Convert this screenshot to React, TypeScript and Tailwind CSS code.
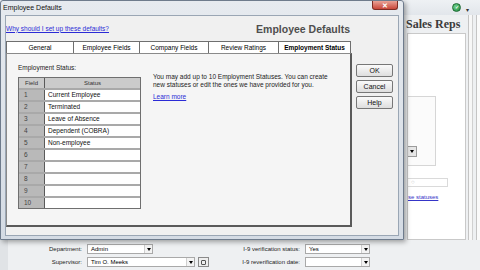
import React from 'react';

const rows: [string, string][] = [
  ['1', 'Current Employee'],
  ['2', 'Terminated'],
  ['3', 'Leave of Absence'],
  ['4', 'Dependent (COBRA)'],
  ['5', 'Non-employee'],
  ['6', ''],
  ['7', ''],
  ['8', ''],
  ['9', ''],
  ['10', ''],
];

function Combo({ w, text }: { w: string; text: string }) {
  return (
    <div className={`${w} h-[10px] flex items-center bg-white border border-[#a9a9a9]`}>
      <span className="flex-1 pl-[3px] text-[6px] leading-[8px] truncate">{text}</span>
      <div className="w-[8px] h-full flex items-center justify-center bg-[#f3f3f3] border-l border-[#cfcfcf]">
        <div className="w-0 h-0 border-l-[2.5px] border-r-[2.5px] border-t-[3px] border-l-transparent border-r-transparent border-t-black" />
      </div>
    </div>
  );
}

function Tab({ label, w, active }: { label: string; w: string; active?: boolean }) {
  return (
    <div
      className={`${w} h-[12px] flex items-center justify-center bg-white border-t border-l border-[#6f6f6f] ${
        active ? 'font-bold border-r border-t-[1.5px] border-[#3a3a3a]' : ''
      } text-[6.5px] leading-[8px] whitespace-nowrap`}
    >
      {label}
    </div>
  );
}

function Btn({ label }: { label: string }) {
  return (
    <div className="w-[37px] h-[13px] flex items-center justify-center rounded-[2px] border border-[#777] bg-[linear-gradient(#fafafa,#dedede)] text-[7px] leading-[8px] text-[#111]">
      {label}
    </div>
  );
}

export default function App() {
  return (
    <div className="relative w-[480px] h-[270px] overflow-hidden bg-[#eef0f2] font-['Liberation_Sans',Arial,sans-serif] text-black">
      {/* background application */}
      <div className="w-full h-full flex flex-col">
        <div className="h-[15px] flex items-center justify-end gap-[5px] pr-[11px] bg-[linear-gradient(#eef1f4,#e2e6eb)]">
          <div className="w-[9px] h-[9px] rounded-full bg-[radial-gradient(circle_at_35%_35%,#6fd08a,#1f8a3f)] border border-[#1b6b33] flex items-center justify-center text-white text-[5px] leading-[5px] font-bold">
            ✓
          </div>
          <div className="text-[6px] leading-[6px] text-[#333] mt-[4px]">▾</div>
        </div>
        <div className="flex-1 flex">
          <div className="flex-1" />
          <div className="w-[76px] flex">
            <div className="flex-1 flex flex-col pl-[2px]">
              <div className="h-[18px] flex items-center font-['Liberation_Serif',serif] font-bold text-[12px] text-[#3b3b3b]">
                Sales Reps
              </div>
              <div className="flex-1 flex flex-col bg-white border border-[#c9c9c9] ml-[1px]">
                <div className="h-[62px]" />
                <div className="h-[70px] w-[28px] border border-[#d6d6d6] border-l-0 bg-[#fbfbfb] flex flex-col justify-end pb-[8px]">
                  <div className="w-[9px] h-[11px] bg-[#e6e6e6] border border-[#9b9b9b] border-l-0 flex items-center justify-center">
                    <div className="w-0 h-0 border-l-[2.5px] border-r-[2.5px] border-t-[3px] border-l-transparent border-r-transparent border-t-black" />
                  </div>
                </div>
                <div className="h-[12px]" />
                <div className="w-[40px] h-[9px] border border-[#dadada] border-l-0 text-[6px] leading-[7px] text-[#bbb] pl-[3px]">
                  ○
                </div>
                <div className="mt-[6px] text-[6px] leading-[8px] text-[#3535c8] underline whitespace-nowrap">se statuses</div>
              </div>
            </div>
            <div className="w-[14px] flex">
              <div className="w-[3px] border-r border-[#c4c4c4]" />
              <div className="w-[4px] bg-[#f7f7f7] border-r border-[#d0d0d0]" />
              <div className="w-[4px] border-r border-[#c4c4c4]" />
              <div className="flex-1 bg-[#fafafa]" />
            </div>
          </div>
        </div>
        <div className="h-[30px] flex flex-col gap-[3px] pt-[4px] border-l-[8px] border-[#e0e3e6]">
          <div className="flex items-center h-[10px]">
            <div className="w-[227px] flex items-center">
              <div className="w-[74px] text-right text-[6px] leading-[8px] text-[#222]">Department:</div>
              <div className="ml-[5px]">
                <Combo w="w-[66px]" text="Admin" />
              </div>
            </div>
            <div className="w-[65px] text-right text-[6px] leading-[8px] text-[#222] whitespace-nowrap">I-9 verification status:</div>
            <div className="ml-[5px]">
              <Combo w="w-[65px]" text="Yes" />
            </div>
          </div>
          <div className="flex items-center h-[10px]">
            <div className="w-[227px] flex items-center">
              <div className="w-[74px] text-right text-[6px] leading-[8px] text-[#222]">Supervisor:</div>
              <div className="ml-[5px]">
                <Combo w="w-[108px]" text="Tim O. Meeks" />
              </div>
              <div className="ml-[3px] w-[11px] h-[10px] border border-[#8a8a8a] bg-[#eeeeee] flex items-center justify-center">
                <div className="w-[5px] h-[5px] border border-[#555] rounded-[1px]" />
              </div>
            </div>
            <div className="w-[65px] text-right text-[6px] leading-[8px] text-[#222] whitespace-nowrap">I-9 reverification date:</div>
            <div className="ml-[5px]">
              <Combo w="w-[65px]" text="" />
            </div>
          </div>
        </div>
      </div>

      {/* dialog window */}
      <div className="absolute left-0 top-0 w-[404px] h-[240px] flex flex-col bg-[linear-gradient(#e6eaef,#d4dbe4)] border border-[#6e7b8c] rounded-t-[3px] shadow-[2px_2px_5px_rgba(0,0,0,0.35)]">
        <div className="h-[14px] flex items-start justify-between">
          <span className="pl-[2px] pt-[2px] text-[7px] leading-[9px] text-[#111]">Employee Defaults</span>
          <div className="mr-[5px] w-[26px] h-[9px] bg-[linear-gradient(#eaa397,#c9473a)] border border-[#7d2c24] border-t-0 rounded-b-[3px] flex items-center justify-center text-white text-[7px] leading-[7px] font-bold">
            ✕
          </div>
        </div>
        <div className="flex-1 flex mx-[4px] mb-[3px] bg-[#f0f0f0] border border-[#9aa6b4]">
          {/* left column */}
          <div className="w-[346px] flex flex-col">
            <div className="h-[25px] flex items-center justify-between">
              <span className="text-[6.5px] leading-[8px] text-[#2b2bd6] underline whitespace-nowrap">
                Why should I set up these defaults?
              </span>
              <span className="pr-[2px] text-[10.5px] leading-[12px] font-bold text-[#4e4e4e] whitespace-nowrap">
                Employee Defaults
              </span>
            </div>
            <div className="h-[12px] flex items-end">
              <Tab label="General" w="w-[67px]" />
              <Tab label="Employee Fields" w="w-[66px]" />
              <Tab label="Company Fields" w="w-[69px]" />
              <Tab label="Review Ratings" w="w-[70px]" />
              <Tab label="Employment Status" w="w-[73px]" active />
            </div>
            <div className="flex-1 mb-[8px] flex bg-[#f5f5f5] border border-[#8a8a8a] border-b-2 border-r-2 border-b-[#5a5a5a] border-r-[#5a5a5a] pt-[10px] pl-[11px]">
              <div className="w-[123px] flex flex-col">
                <div className="h-[8px] text-[6.5px] leading-[8px] text-[#222]">Employment Status:</div>
                <div className="mt-[5px] border border-[#6f6f6f] bg-white">
                  <div className="h-[10px] flex bg-[#cbcbcb] text-[6px] leading-[8px] text-[#333]">
                    <div className="w-[26px] border-r border-[#5a5a5a] flex items-center justify-center">Field</div>
                    <div className="flex-1 flex items-center justify-center">Status</div>
                  </div>
                  {rows.map(([n, s]) => (
                    <div key={n} className="h-[12px] flex border-t-2 border-[#a9a9a9] text-[6.5px] leading-[8px]">
                      <div className="w-[26px] bg-[#b9b9b9] border-r border-[#5a5a5a] pl-[5px] flex items-center text-[#444]">
                        {n}
                      </div>
                      <div className="flex-1 bg-white pl-[3px] flex items-center text-[#111] whitespace-nowrap">{s}</div>
                    </div>
                  ))}
                </div>
              </div>
              <div className="ml-[12px] pt-[9px] w-[185px] flex flex-col">
                <div className="text-[6.5px] leading-[8px] text-[#222]">
                  You may add up to 10 Employment Statuses. You can create new statuses or edit the ones we have provided for you.
                </div>
                <div className="mt-[4px] text-[6.5px] leading-[8px] text-[#2b2bd6] underline">Learn more</div>
              </div>
            </div>
          </div>
          {/* button column */}
          <div className="flex-1 flex flex-col gap-[3px] pl-[4px] pt-[48px]">
            <Btn label="OK" />
            <Btn label="Cancel" />
            <Btn label="Help" />
          </div>
        </div>
      </div>
    </div>
  );
}
